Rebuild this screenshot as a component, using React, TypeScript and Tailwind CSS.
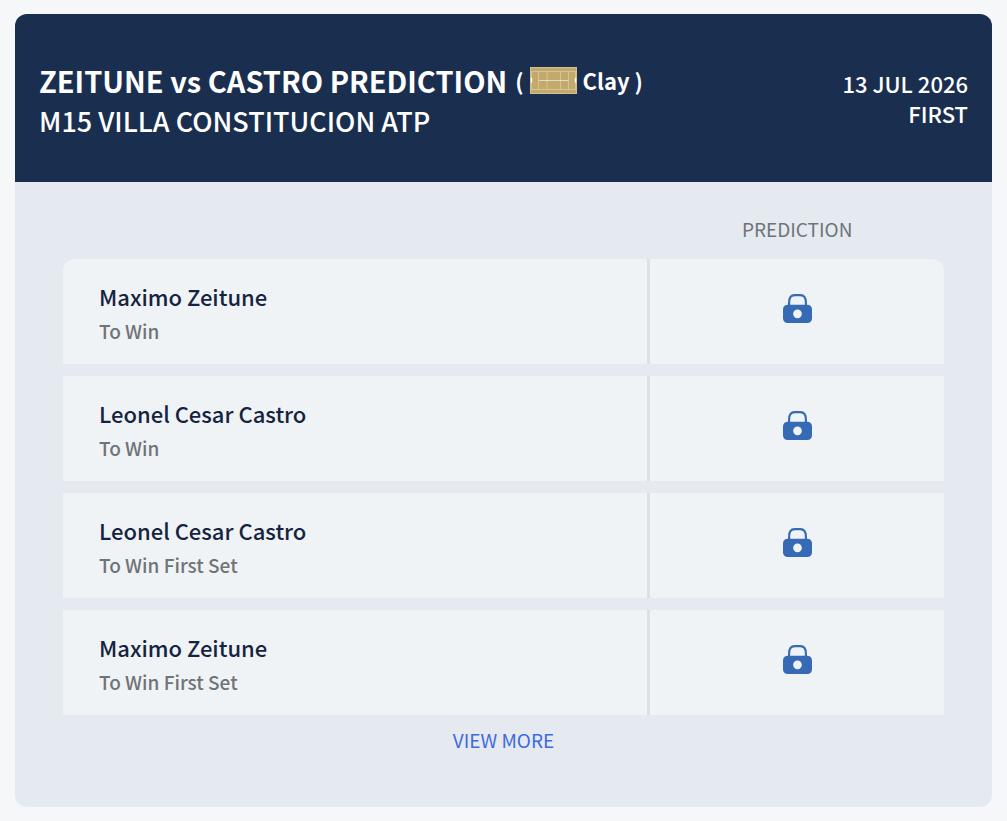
type Prediction = {
    player: string;
    market: string;
};

const predictions: Prediction[] = [
    { player: "Maximo Zeitune", market: "To Win" },
    { player: "Leonel Cesar Castro", market: "To Win" },
    { player: "Leonel Cesar Castro", market: "To Win First Set" },
    { player: "Maximo Zeitune", market: "To Win First Set" },
];

const ClayCourt = () => (
    <svg viewBox="0 0 47 27" className="h-[27px] w-[47px] shrink-0" aria-hidden="true">
        <rect width="47" height="27" fill="#c2a96c" />
        <path d="M0 .5H47M0 26.5H47M.5 0V27M46.5 0V27" stroke="#d3c08e" />
        <g fill="none" stroke="#dccb9d" strokeWidth="0.8">
            <path d="M1.5 4.5H45.5V22.5H1.5ZM8.5 4.5V22.5M17 4.5V22.5M30.5 4.5V22.5M38.5 4.5V22.5" />
            <path d="M8.5 13.5H38.5" stroke="#f1e8cf" />
        </g>
        <path d="M1.5 11V15.5M45.5 11V15.5" stroke="#fff" strokeWidth="1.4" />
    </svg>
);

const LockIcon = () => (
    <svg viewBox="0 0 30 30" className="mx-auto h-[29px] w-[29px]" aria-hidden="true">
        <path
            d="M6.3 13V9C6.3 4 8.5 1.2 12 1.2H18C21.5 1.2 23.7 4 23.7 9V13"
            fill="none"
            stroke="#376ab5"
            strokeWidth="2.2"
        />
        <path
            d="M5 11H25C28 11 30 13 30 16V25C30 28 28 30 25 30H5C2 30 0 28 0 25V16C0 13 2 11 5 11Z"
            fill="#376ab5"
        />
        <circle cx="15" cy="20.5" r="4.5" fill="#f0f3f5" />
    </svg>
);

const App = () => {
    return (
        <main className="min-h-screen bg-[#f5f7f9] px-[15px] py-3.5 font-['Noto_Sans_CJK_SC','Noto_Sans',sans-serif]">
            <section className="overflow-hidden rounded-xl bg-[#e5eaf1]">
                <header className="flex items-center justify-between bg-[#1a2f50] px-6 pt-[46px] pb-10 text-white">
                    <div>
                        <h1 className="flex items-center gap-2 text-[29px] leading-10 font-bold">
                            ZEITUNE vs CASTRO PREDICTION
                            <span className="flex items-center gap-1.5 text-[22px]">
                                ( <ClayCourt /> Clay )
                            </span>
                        </h1>
                        <p className="text-[27px] leading-[42px] font-medium">M15 VILLA CONSTITUCION ATP</p>
                    </div>
                    <div className="pb-1.5 text-right text-[22px] leading-[30px] font-medium">
                        <p>13 JUL 2026</p>
                        <p>FIRST</p>
                    </div>
                </header>

                <div className="px-12 pt-4 pb-[54px]">
                    <table className="w-full table-fixed border-separate border-spacing-x-0 border-spacing-y-3">
                        <thead>
                            <tr>
                                <td className="w-2/3"></td>
                                <th scope="col" className="h-[37px] w-1/3 p-0 text-[19px] leading-6 font-normal text-[#6f7478]">
                                    PREDICTION
                                </th>
                            </tr>
                        </thead>
                        <tbody>
                            {predictions.map((item, index) => (
                                <tr key={index} className="group">
                                    <td className="h-[105px] border-r-3 border-[#dce1e4] bg-[#f0f3f5] p-0 pt-1 pl-9 group-first:rounded-tl-xl">
                                        <h2 className="text-[22px] leading-[34px] font-medium text-[#14243f]">{item.player}</h2>
                                        <p className="text-[19px] leading-9 font-medium text-[#6f7478]">{item.market}</p>
                                    </td>
                                    <td className="bg-[#f0f3f5] p-0 pb-1.5 group-first:rounded-tr-xl">
                                        <LockIcon />
                                    </td>
                                </tr>
                            ))}
                        </tbody>
                    </table>
                    <div className="text-center text-[19px] leading-[26px]">
                        <a href="#more" className="text-[#4169e1]">
                            VIEW MORE
                        </a>
                    </div>
                </div>
            </section>
        </main>
    );
};

export default App;
